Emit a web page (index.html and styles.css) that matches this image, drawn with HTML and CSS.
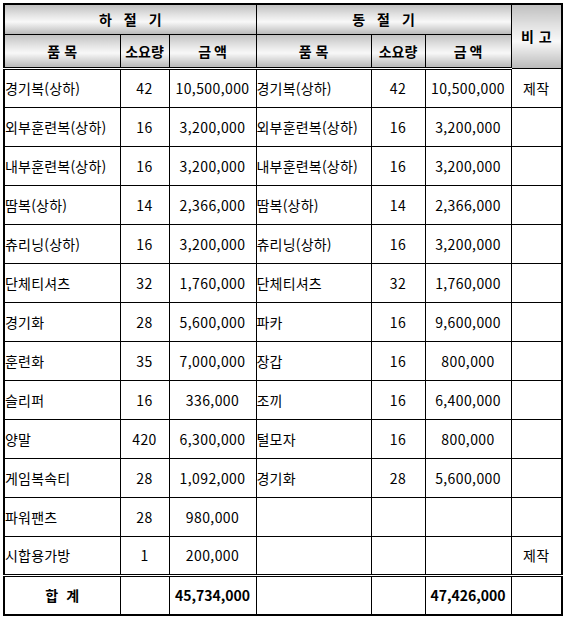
FILE: index.html
```html
<!DOCTYPE html>
<html lang="ko">
<head>
<meta charset="utf-8">
<title>피복 구입 내역</title>
<link rel="stylesheet" href="styles.css">
</head>
<body>
<table class="sheet">
  <colgroup>
    <col class="c-name"><col class="c-qty"><col class="c-amt">
    <col class="c-name2"><col class="c-qty2"><col class="c-amt2">
    <col class="c-note">
  </colgroup>
  <thead>
    <tr class="h1">
      <th colspan="3" class="hd season">하절기</th>
      <th colspan="3" class="hd season">동절기</th>
      <th rowspan="2" class="hd note-h">비고</th>
    </tr>
    <tr class="h2">
      <th class="hd sp-name">품목</th>
      <th class="hd">소요량</th>
      <th class="hd sp-amt">금액</th>
      <th class="hd sp-name">품목</th>
      <th class="hd">소요량</th>
      <th class="hd sp-amt">금액</th>
    </tr>
  </thead>
  <tbody>
    <tr><td class="name">경기복(상하)</td><td class="num">42</td><td class="num">10,500,000</td><td class="name">경기복(상하)</td><td class="num">42</td><td class="num">10,500,000</td><td class="num">제작</td></tr>
    <tr><td class="name">외부훈련복(상하)</td><td class="num">16</td><td class="num">3,200,000</td><td class="name">외부훈련복(상하)</td><td class="num">16</td><td class="num">3,200,000</td><td></td></tr>
    <tr><td class="name">내부훈련복(상하)</td><td class="num">16</td><td class="num">3,200,000</td><td class="name">내부훈련복(상하)</td><td class="num">16</td><td class="num">3,200,000</td><td></td></tr>
    <tr><td class="name">땀복(상하)</td><td class="num">14</td><td class="num">2,366,000</td><td class="name">땀복(상하)</td><td class="num">14</td><td class="num">2,366,000</td><td></td></tr>
    <tr><td class="name">츄리닝(상하)</td><td class="num">16</td><td class="num">3,200,000</td><td class="name">츄리닝(상하)</td><td class="num">16</td><td class="num">3,200,000</td><td></td></tr>
    <tr><td class="name">단체티셔츠</td><td class="num">32</td><td class="num">1,760,000</td><td class="name">단체티셔츠</td><td class="num">32</td><td class="num">1,760,000</td><td></td></tr>
    <tr><td class="name">경기화</td><td class="num">28</td><td class="num">5,600,000</td><td class="name">파카</td><td class="num">16</td><td class="num">9,600,000</td><td></td></tr>
    <tr><td class="name">훈련화</td><td class="num">35</td><td class="num">7,000,000</td><td class="name">장갑</td><td class="num">16</td><td class="num">800,000</td><td></td></tr>
    <tr><td class="name">슬리퍼</td><td class="num">16</td><td class="num">336,000</td><td class="name">조끼</td><td class="num">16</td><td class="num">6,400,000</td><td></td></tr>
    <tr><td class="name">양말</td><td class="num">420</td><td class="num">6,300,000</td><td class="name">털모자</td><td class="num">16</td><td class="num">800,000</td><td></td></tr>
    <tr><td class="name">게임복속티</td><td class="num">28</td><td class="num">1,092,000</td><td class="name">경기화</td><td class="num">28</td><td class="num">5,600,000</td><td></td></tr>
    <tr><td class="name">파워팬츠</td><td class="num">28</td><td class="num">980,000</td><td></td><td></td><td></td><td></td></tr>
    <tr class="last"><td class="name">시합용가방</td><td class="num">1</td><td class="num">200,000</td><td></td><td></td><td></td><td class="num">제작</td></tr>
  </tbody>
  <tfoot>
    <tr class="total">
      <td class="sum-label">합계</td><td></td><td class="sum">45,734,000</td>
      <td></td><td></td><td class="sum">47,426,000</td><td></td>
    </tr>
  </tfoot>
</table>
</body>
</html>
```
FILE: styles.css
```css
html, body {
  margin: 0;
  padding: 0;
  background: #ffffff;
}

body {
  font-family: "Noto Sans CJK KR", "Noto Sans", sans-serif;
  color: #000;
}

.sheet {
  margin: 3px 0 0 3px;
  border-collapse: collapse;
  table-layout: fixed;
  width: 560px;
  border: 2px solid #000;
  font-size: 14px;
  line-height: 1;
}

.c-name { width: 116px; }
.c-qty { width: 49px; }
.c-amt { width: 87px; }
.c-name2 { width: 115px; }
.c-qty2 { width: 54px; }
.c-amt2 { width: 86px; }
.c-note { width: 51px; }

.sheet th,
.sheet td {
  border: 1px solid #000;
  padding: 0;
  overflow: hidden;
  white-space: nowrap;
}

.hd {
  background: linear-gradient(to bottom, #c0c0c0 0%, #e4e4e4 35%, #f8f8f8 58%, #d8d8d8 80%, #bababa 100%);
  font-weight: bold;
  font-size: 14px;
  text-align: center;
  vertical-align: middle;
}

.note-h {
  letter-spacing: 5px;
  text-indent: 5px;
}

.season {
  letter-spacing: 12px;
  text-indent: 12px;
}

.sp-name {
  letter-spacing: 4px;
  text-indent: 4px;
}

.sp-amt {
  letter-spacing: 3px;
  text-indent: 3px;
}

.h1 { height: 30px; }
.h2 { height: 34px; }
.h2 th { border-bottom: 3px double #000; }

tbody tr { height: 39px; }
tbody tr.last td { border-bottom: 3px double #000; }

.name {
  text-align: left;
  padding-left: 1px;
  letter-spacing: 0.2px;
}

.num {
  text-align: center;
  letter-spacing: 0.4px;
}

.total { height: 40px; }

.sum-label {
  font-weight: bold;
  text-align: center;
  letter-spacing: 8px;
  text-indent: 8px;
}

.sum {
  font-weight: bold;
  text-align: center;
}
```
